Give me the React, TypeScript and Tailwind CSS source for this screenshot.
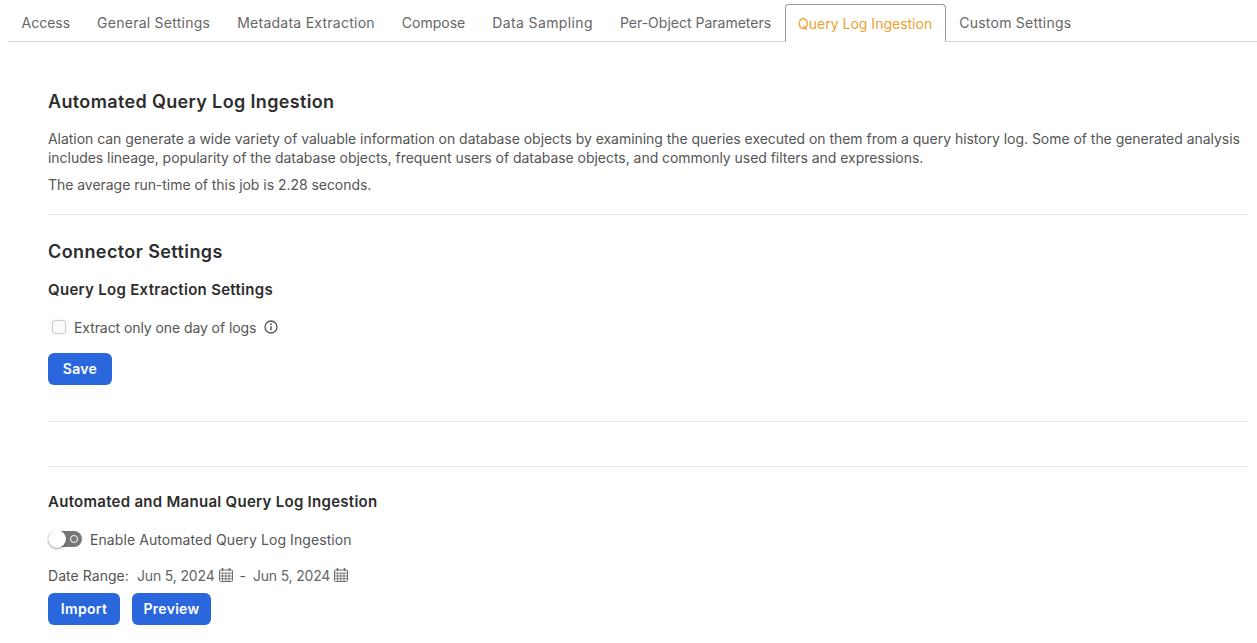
import React from 'react';

// tracking per tab, the reference font's widths differ from Inter's glyph by glyph
const TABS = [
  { label: 'Access', tracking: 'tracking-normal' },
  { label: 'General Settings', tracking: 'tracking-[0.25px]' },
  { label: 'Metadata Extraction', tracking: 'tracking-[0.25px]' },
  { label: 'Compose', tracking: 'tracking-normal' },
  { label: 'Data Sampling', tracking: 'tracking-[0.38px]' },
  { label: 'Per-Object Parameters', tracking: 'tracking-normal' },
  { label: 'Query Log Ingestion', tracking: 'tracking-normal' },
  { label: 'Custom Settings', tracking: 'tracking-[0.25px]' },
];
const ACTIVE_TAB = 'Query Log Ingestion';

const CalendarIcon: React.FC = () => (
  <svg width="14" height="14" viewBox="0 0 14 14" className="shrink-0 text-[#6e6e6e]" fill="none" stroke="currentColor" strokeWidth="1">
    <rect x="0.5" y="2" width="13" height="11.5" rx="1" />
    <path d="M0.5 5h13M0.5 8h13M0.5 10.8h13M3.6 5v8.5M6.8 5v8.5M10 5v8.5" strokeWidth="0.9" />
    <path d="M3.5 0v3M10.5 0v3" strokeWidth="1.6" />
  </svg>
);

const InfoIcon: React.FC = () => (
  <svg width="14" height="14" viewBox="0 0 14 14" className="text-[#555]" fill="none" stroke="currentColor">
    <circle cx="7" cy="7" r="6" strokeWidth="1.3" />
    <path d="M7 6.2v4" strokeWidth="1.5" />
    <circle cx="7" cy="4.2" r="0.9" fill="currentColor" stroke="none" />
  </svg>
);

const PrimaryButton: React.FC<{ label: string; className?: string }> = ({ label, className = '' }) => (
  <button className={`h-8 rounded-md bg-[#2a67dc] pb-px text-[14px] font-semibold tracking-[0.3px] text-white ${className}`}>{label}</button>
);

const Divider: React.FC<{ className?: string }> = ({ className = '' }) => (
  <hr className={`border-0 border-t border-[#e4e4e4] ${className}`} />
);

export default function App() {
  return (
    <div className="h-[643px] w-[1257px] overflow-hidden bg-white font-['Inter',sans-serif] text-[14px] tracking-[-0.04px] text-[#555]">
      <nav className="ml-2 flex h-[42px] items-end border-b border-[#d4d4d4]">
        {TABS.map(tab => (
          <div
            key={tab.label}
            className={
              tab.label === ACTIVE_TAB
                ? `-mb-px flex h-[38px] items-center rounded-t border border-[#999] border-b-white bg-white px-[12.5px] text-[#f0a030] ${tab.tracking}`
                : `flex h-[37px] items-center px-[13.5px] text-[#666] ${tab.tracking}`
            }
          >
            {tab.label}
          </div>
        ))}
      </nav>

      <main className="pl-12 pr-[9px]">
        <h1 className="mt-[48px] text-[18px] font-semibold leading-[24px] tracking-[0.35px] text-[#2d2d2d]">Automated Query Log Ingestion</h1>
        <p className="mt-[15px] w-[1200px] leading-[19px]">
          Alation can generate a wide variety of valuable information on database objects by examining the queries executed on them from a query history log. Some of the generated analysis includes lineage, popularity of the database objects, frequent users of database objects, and commonly used filters and expressions.
        </p>
        <p className="mt-2 leading-[19px]">The average run-time of this job is 2.28 seconds.</p>
        <Divider className="mt-5" />

        <h2 className="mt-[25px] text-[18px] font-semibold leading-[24px] tracking-[0.4px] text-[#2d2d2d]">Connector Settings</h2>
        <h3 className="mt-[16px] text-[15px] font-semibold leading-[20px] tracking-[0.3px] text-[#2d2d2d]">Query Log Extraction Settings</h3>
        <label className="mt-[17px] flex h-5 items-center">
          <span className="ml-[4px] h-[14px] w-[14px] rounded-[3px] border border-[#ccc] bg-[#fafafa] shadow-[0_0_0_3px_#fbfbfb]" />
          <span className="ml-[8px] tracking-[-0.08px]">Extract only one day of logs</span>
          <span className="ml-2 flex"><InfoIcon /></span>
        </label>
        <PrimaryButton label="Save" className="mt-4 block w-16" />
        <Divider className="mt-[36px]" />
        <Divider className="mt-[44px]" />

        <h3 className="mt-[25px] text-[15px] font-semibold leading-[20px] tracking-[0.28px] text-[#2d2d2d]">Automated and Manual Query Log Ingestion</h3>
        <div className="mt-[17px] flex h-5 items-center">
          <span className="relative h-4 w-[34px] rounded-full bg-[#777]">
            <span className="absolute left-0 top-[-1px] h-[18px] w-[18px] rounded-full bg-white shadow-[0_1px_2px_rgba(0,0,0,0.4)]" />
            <span className="absolute right-[4px] top-[4px] h-2 w-2 rounded-full border border-white" />
          </span>
          <span className="ml-2 tracking-[0.08px]">Enable Automated Query Log Ingestion</span>
        </div>
        <div className="mt-[16px] flex h-5 items-center">
          <span className="tracking-[0.05px]">Date Range:</span>
          <span className="ml-2 tracking-[-0.15px] text-[#666]">Jun 5, 2024</span>
          <span className="ml-1 flex"><CalendarIcon /></span>
          <span className="mx-[7px]">-</span>
          <span className="tracking-[-0.2px] text-[#666]">Jun 5, 2024</span>
          <span className="ml-1 flex"><CalendarIcon /></span>
        </div>
        <div className="mt-2 flex gap-3">
          <PrimaryButton label="Import" className="w-[72px]" />
          <PrimaryButton label="Preview" className="w-[79px]" />
        </div>
      </main>
    </div>
  );
}
